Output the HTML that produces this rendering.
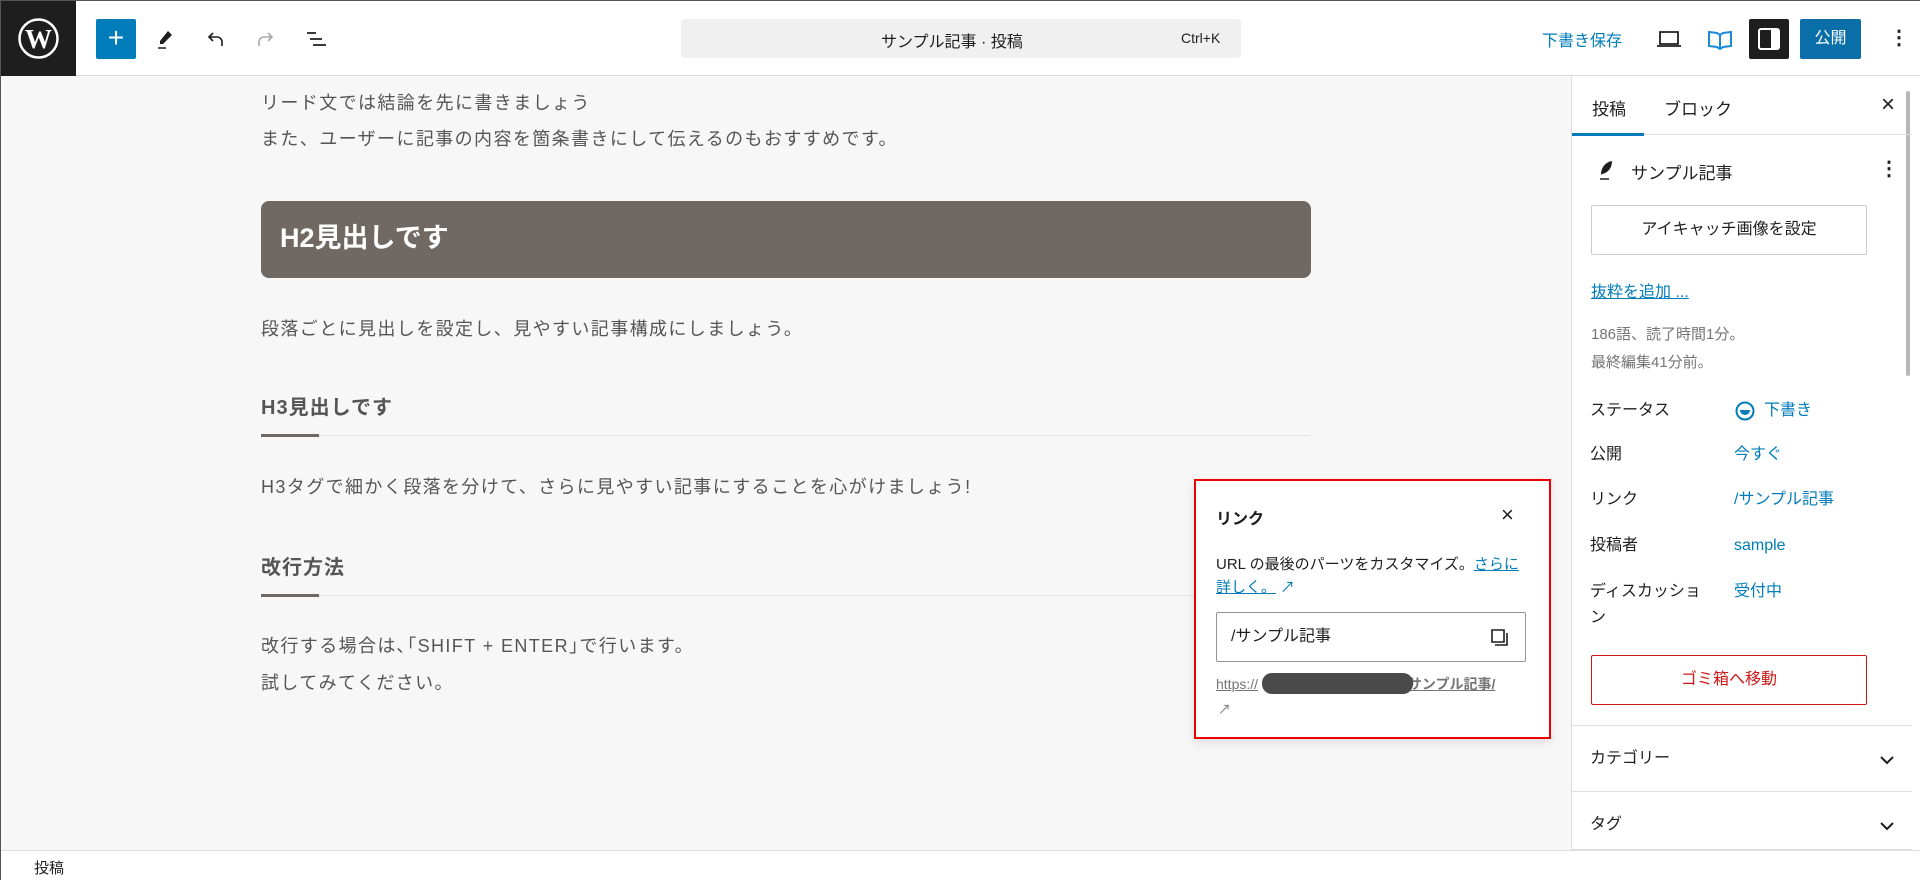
<!DOCTYPE html>
<html><head><meta charset="utf-8"><style>
*{box-sizing:border-box;margin:0;padding:0}
body{width:1920px;height:880px;overflow:hidden;background:#fff;font-family:"Liberation Sans","Noto Sans CJK JP",sans-serif;color:#1e1e1e;position:relative;border:1px solid #555}
.abs{position:absolute}
.hdr{left:0;top:0;width:1920px;height:75px;border-bottom:1px solid #ddd;background:#fff}
.logo{left:0;top:0;width:75px;height:75px;background:#1e1e1e}
.ed{left:0;top:75px;width:1570px;height:774px;background:#f7f7f7}
.p{position:absolute;left:260px;font-size:18px;letter-spacing:1.4px;color:#555;white-space:nowrap}
.sb{left:1570px;top:75px;width:350px;height:774px;background:#fff;border-left:1px solid #ddd}
.lbl{position:absolute;left:1589px;font-size:16px;line-height:22px;color:#1e1e1e}
.val{position:absolute;left:1733px;font-size:16px;line-height:22px;color:#007cba}
.status{left:0;top:849px;width:1920px;height:31px;border-top:1px solid #ddd;background:#fff;font-size:15px}
</style></head><body>
<div class="abs hdr"></div>
<div class="abs logo"><svg width="75" height="75"><circle cx="37.5" cy="37.5" r="19" fill="none" stroke="#fff" stroke-width="2.5"/><text x="37.5" y="47" text-anchor="middle" fill="#fff" font-family="Liberation Serif" font-weight="bold" font-size="27">W</text></svg></div>
<div class="abs" style="left:95px;top:18px;width:40px;height:40px;background:#007cba;border-radius:2px;color:#fff;font-size:28px;line-height:38px;text-align:center">+</div>
<svg class="abs" style="left:152px;top:26px" width="24" height="24"><path d="M15 4l4 4-9 9H7v-3z" fill="#1e1e1e"/><path d="M5 21h8" stroke="#1e1e1e" stroke-width="1.5"/></svg>
<svg class="abs" style="left:203px;top:26px" width="24" height="24"><path d="M9 6L5 10l4 4M5 10h8a5 5 0 0 1 5 5v4" fill="none" stroke="#1e1e1e" stroke-width="1.6"/></svg>
<svg class="abs" style="left:252px;top:26px" width="24" height="24"><path d="M15 6l4 4-4 4M19 10h-8a5 5 0 0 0-5 5v4" fill="none" stroke="#aaa" stroke-width="1.6"/></svg>
<svg class="abs" style="left:303px;top:26px" width="24" height="24"><path d="M3 6h9M6 12h12M9 18h13" stroke="#1e1e1e" stroke-width="1.8"/></svg>
<div class="abs" style="left:680px;top:18px;width:560px;height:39px;background:#f0f0f0;border-radius:4px"></div>
<div class="abs" style="left:880px;top:27px;font-size:16px">サンプル記事 · 投稿</div>
<div class="abs" style="left:1180px;top:29px;font-size:14px">Ctrl+K</div>
<div class="abs" style="left:1541px;top:26px;font-size:16px;color:#007cba">下書き保存</div>
<svg class="abs" style="left:1655px;top:26px" width="26" height="24"><path d="M4 5h18v12H4zM1 19h24" fill="none" stroke="#1e1e1e" stroke-width="1.8"/></svg>
<svg class="abs" style="left:1706px;top:26px" width="26" height="24"><path d="M2 5l8 1 3 2 3-2 8-1v14l-8 1-3 2-3-2-8-1z M13 8v14" fill="none" stroke="#1a8cd8" stroke-width="2"/></svg>
<div class="abs" style="left:1748px;top:18px;width:40px;height:40px;background:#1e1e1e;border-radius:2px"><svg width="40" height="40"><rect x="10" y="10" width="20" height="20" rx="2" fill="none" stroke="#fff" stroke-width="2"/><rect x="22" y="10" width="8" height="20" fill="#fff"/></svg></div>
<div class="abs" style="left:1799px;top:18px;width:61px;height:40px;background:#0a6ea8;border-radius:2px;color:#fff;font-size:16px;line-height:40px;text-align:center">公開</div>
<div class="abs" style="left:1888px;top:24px;font-size:20px;font-weight:bold">⋮</div>

<div class="abs ed"></div>
<div class="p" style="top:88px">リード文では結論を先に書きましょう</div>
<div class="p" style="top:124px">また、ユーザーに記事の内容を箇条書きにして伝えるのもおすすめです。</div>
<div class="abs" style="left:260px;top:200px;width:1050px;height:77px;background:#706862;border-radius:8px;color:#fff;font-size:27px;font-weight:bold;line-height:75px;padding-left:19px">H2見出しです</div>
<div class="p" style="top:314px">段落ごとに見出しを設定し、見やすい記事構成にしましょう。</div>
<div class="p" style="top:390px;font-size:20px;font-weight:bold;letter-spacing:1px">H3見出しです</div>
<div class="abs" style="left:260px;top:434px;width:1050px;height:1px;background:#e2e2e2"></div>
<div class="abs" style="left:260px;top:433px;width:58px;height:3px;background:#706862"></div>
<div class="p" style="top:472px">H3タグで細かく段落を分けて、さらに見やすい記事にすることを心がけましょう!</div>
<div class="p" style="top:550px;font-size:20px;font-weight:bold;letter-spacing:1px">改行方法</div>
<div class="abs" style="left:260px;top:594px;width:1050px;height:1px;background:#e2e2e2"></div>
<div class="abs" style="left:260px;top:593px;width:58px;height:3px;background:#706862"></div>
<div class="p" style="top:631px">改行する場合は､｢SHIFT + ENTER｣で行います。</div>
<div class="p" style="top:668px">試してみてください。</div>

<div class="abs" style="left:1193px;top:478px;width:357px;height:260px;border:2px solid #e00;background:#fff;box-shadow:0 4px 10px rgba(0,0,0,.1)"></div>
<div class="abs" style="left:1215px;top:504px;font-size:16px;font-weight:bold">リンク</div>
<div class="abs" style="left:1500px;top:501px;font-size:22px">×</div>
<div class="abs" style="left:1215px;top:552px;width:312px;font-size:15px;line-height:23px;color:#1e1e1e">URL の最後のパーツをカスタマイズ。<span style="color:#007cba;text-decoration:underline">さらに詳しく。</span><span style="color:#007cba"> ↗</span></div>
<div class="abs" style="left:1215px;top:611px;width:310px;height:50px;border:1px solid #949494;border-radius:2px;font-size:16px;line-height:48px;padding-left:14px">/サンプル記事</div>
<svg class="abs" style="left:1488px;top:626px" width="22" height="22"><path d="M3 3h12v12H3z" fill="none" stroke="#1e1e1e" stroke-width="1.6"/><path d="M18 6v12H6" fill="none" stroke="#1e1e1e" stroke-width="1.6"/></svg>
<div class="abs" style="left:1215px;top:673px;font-size:14px;color:#757575;text-decoration:underline">https://<span style="display:inline-block;width:146px"></span><b>/サンプル記事/</b></div>
<div class="abs" style="left:1261px;top:672px;width:151px;height:21px;background:#4a4a4a;border-radius:10px"></div>
<div class="abs" style="left:1217px;top:698px;font-size:13px;color:#757575">↗</div>

<div class="abs sb"></div>
<div class="abs" style="left:1905px;top:90px;width:4px;height:285px;background:#888;border-radius:2px;opacity:.6"></div>
<div class="abs" style="left:1591px;top:94px;font-size:17px">投稿</div>
<div class="abs" style="left:1663px;top:94px;font-size:17px">ブロック</div>
<div class="abs" style="left:1880px;top:90px;font-size:24px">×</div>
<div class="abs" style="left:1571px;top:133px;width:340px;height:1px;background:#e0e0e0"></div>
<div class="abs" style="left:1571px;top:132px;width:72px;height:3px;background:#007cba"></div>
<svg class="abs" style="left:1595px;top:157px" width="20" height="24"><path d="M5 17C5 9 10 4 16 3c0 7-4 12-10 13z" fill="#1e1e1e"/><path d="M4 21h9" stroke="#1e1e1e" stroke-width="1.5"/></svg>
<div class="abs" style="left:1630px;top:158px;font-size:17px">サンプル記事</div>
<div class="abs" style="left:1878px;top:155px;font-size:20px;font-weight:bold">⋮</div>
<div class="abs" style="left:1590px;top:204px;width:276px;height:50px;border:1px solid #ccc;border-radius:2px;font-size:16px;line-height:48px;text-align:center">アイキャッチ画像を設定</div>
<div class="abs" style="left:1590px;top:277px;font-size:16px;color:#007cba;text-decoration:underline">抜粋を追加 ...</div>
<div class="abs" style="left:1590px;top:322px;font-size:15px;color:#757575">186語、読了時間1分。</div>
<div class="abs" style="left:1590px;top:350px;font-size:15px;color:#757575">最終編集41分前。</div>
<div class="lbl" style="top:399px">ステータス</div>
<svg class="abs" style="left:1733px;top:399px" width="22" height="22"><circle cx="11" cy="11" r="8.5" fill="none" stroke="#007cba" stroke-width="2"/><path d="M6 10h10a5 5 0 0 1-10 0z" fill="#007cba"/></svg>
<div class="val" style="top:399px;left:1763px">下書き</div>
<div class="lbl" style="top:443px">公開</div><div class="val" style="top:443px">今すぐ</div>
<div class="lbl" style="top:488px">リンク</div><div class="val" style="top:488px">/サンプル記事</div>
<div class="lbl" style="top:534px">投稿者</div><div class="val" style="top:534px">sample</div>
<div class="lbl" style="top:578px;line-height:26px;width:115px">ディスカッション</div><div class="val" style="top:580px">受付中</div>
<div class="abs" style="left:1590px;top:654px;width:276px;height:50px;border:1px solid #cc1818;border-radius:2px;font-size:16px;line-height:48px;text-align:center;color:#cc1818">ゴミ箱へ移動</div>
<div class="abs" style="left:1571px;top:724px;width:340px;height:1px;background:#e0e0e0"></div>
<div class="lbl" style="top:747px">カテゴリー</div>
<svg class="abs" style="left:1876px;top:749px" width="20" height="20"><path d="M4 7l6 6 6-6" fill="none" stroke="#1e1e1e" stroke-width="2"/></svg>
<div class="abs" style="left:1571px;top:790px;width:340px;height:1px;background:#e0e0e0"></div>
<div class="lbl" style="top:813px">タグ</div>
<svg class="abs" style="left:1876px;top:815px" width="20" height="20"><path d="M4 7l6 6 6-6" fill="none" stroke="#1e1e1e" stroke-width="2"/></svg>
<div class="abs" style="left:1571px;top:848px;width:340px;height:1px;background:#e0e0e0"></div>

<div class="abs status"><span style="position:absolute;left:33px;top:6px">投稿</span></div>
</body></html>
